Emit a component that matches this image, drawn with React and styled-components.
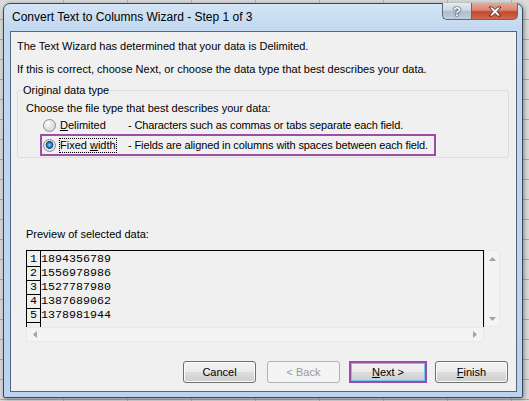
import React from "react";
import styled, { createGlobalStyle, css } from "styled-components";

const GlobalStyle = createGlobalStyle`
  html, body {
    margin: 0;
    padding: 0;
  }
  body {
    width: 529px;
    height: 401px;
    overflow: hidden;
    font-family: "Liberation Sans", Arial, sans-serif;
    background-color: #d9d9d9;
    background-image:
      repeating-linear-gradient(to bottom, transparent 0, transparent 19px, #a9a9a9 19px, #a9a9a9 20px),
      repeating-linear-gradient(to right, transparent 0, transparent 63px, #b4b4b4 63px, #b4b4b4 64px);
  }
`;

const Desktop = styled.div`
  padding: 3px 0 0 3px;
  height: 401px;
  box-sizing: border-box;
`;

const Window = styled.div`
  width: 520px;
  height: 395px;
  box-sizing: border-box;
  display: flex;
  flex-direction: column;
  padding: 0 5px 5px 6px;
  border: 1px solid #3b4858;
  border-radius: 7px 7px 2px 2px;
  background: linear-gradient(to bottom, #d3e4f5 0, #c1d8f0 27px, #b9d3f0 100%);
  box-shadow: 1px 1px 4px rgba(0, 0, 0, 0.4);
`;

const TitleBar = styled.div`
  height: 27px;
  display: flex;
  align-items: flex-start;
`;

const Title = styled.div`
  flex: 1;
  align-self: center;
  padding-left: 2px;
  font-size: 12px;
  color: #000;
  line-height: 27px;
`;

const CaptionButtons = styled.div`
  display: flex;
  margin: -1px -1px 0 0;
`;

const CaptionButton = styled.div`
  height: 17px;
  box-sizing: border-box;
  display: flex;
  align-items: center;
  justify-content: center;
  border: 1px solid #5b6a7c;
  border-top: none;
  ${(p) =>
    p.$close
      ? css`
          width: 47px;
          border-radius: 0 0 5px 0;
          background: linear-gradient(to bottom, #e8a797 0%, #d88670 45%, #c4492f 55%, #d0684c 100%);
        `
      : css`
          width: 29px;
          border-right: none;
          border-radius: 0 0 0 5px;
          background: linear-gradient(to bottom, #e3eaf3 0%, #cdd7e3 45%, #aebbcb 55%, #c3cfdd 100%);
        `}
`;

const HelpGlyph = styled.span`
  font-family: "Liberation Sans", Arial, sans-serif;
  font-weight: bold;
  font-size: 13px;
  line-height: 13px;
  color: #fff;
  text-shadow: 0 0 1px #2b3a4c, 0 0 1px #2b3a4c, 0 0 2px #2b3a4c;
`;

const Panel = styled.div`
  height: 361px;
  box-sizing: border-box;
  border: 1px solid #56657a;
  background: #f0f0f0;
  padding: 0 7px 0 6px;
  display: flex;
  flex-direction: column;
  font-size: 11px;
  color: #000;
`;

const Line = styled.div`
  line-height: 14px;
  height: 14px;
  margin-top: ${(p) => p.$gap}px;
  margin-left: ${(p) => p.$indent || 0}px;
  white-space: nowrap;
`;

const GroupBox = styled.fieldset`
  margin: 7px 0 0;
  padding: 0;
  min-width: 0;
  border: 1px solid #d5dfe5;
  border-radius: 3px;
`;

const Legend = styled.legend`
  margin-left: 4px;
  padding: 0 1px;
  line-height: 14px;
`;

const GroupBody = styled.div`
  padding: 4px 0 2px 8px;
`;

const OptionRow = styled.div`
  margin-left: 15px;
  width: 394px;
  height: 20px;
  box-sizing: border-box;
  padding-left: 2px;
  display: flex;
  align-items: center;
  white-space: nowrap;
  ${(p) =>
    p.$highlight &&
    css`
      outline: 2px solid #9b4ea3;
      outline-offset: -1px;
    `}
`;

const Radio = styled.span`
  width: 13px;
  height: 13px;
  box-sizing: border-box;
  border-radius: 50%;
  border: 1px solid #8a8c8e;
  margin-right: 3px;
  flex: none;
  background: ${(p) =>
    p.$checked
      ? "radial-gradient(circle at 50% 45%, #a6e0ff 0, #3a9be6 1.5px, #1a5a9e 3px, #24446b 3.6px, #e9e9e9 4.2px, #cfcfcf 100%)"
      : "radial-gradient(circle at 35% 30%, #ffffff 0, #ececec 3px, #cdcdcd 100%)"};
`;

const OptionCell = styled.span`
  width: 69px;
  flex: none;
`;

const OptionLabel = styled.span`
  display: inline-block;
  line-height: 13px;
  border: 1px dotted ${(p) => (p.$focused ? "#000" : "transparent")};
`;

const Description = styled.span`
  letter-spacing: -0.12px;
`;

const PreviewGrid = styled.div`
  margin: 9px 0 0 9px;
  width: 474px;
  height: 92px;
  display: grid;
  grid-template-columns: 458px 16px;
  grid-template-rows: 77px 15px;
`;

const DataBox = styled.div`
  border: 1px solid #000;
  border-bottom: none;
  display: flex;
  overflow: hidden;
  font-family: "Liberation Mono", "Courier New", monospace;
  font-size: 11.67px;
`;

const NumberColumn = styled.div`
  width: 13px;
  flex: none;
  border-right: 1px solid #000;
  padding-top: 2px;
`;

const NumberCell = styled.div`
  height: 13px;
  line-height: 13px;
  border-bottom: 1px solid #000;
  text-align: center;
`;

const DataColumn = styled.div`
  padding-top: 2px;
`;

const DataLine = styled.div`
  height: 14px;
  line-height: 13px;
`;

const ScrollTrack = styled.div`
  background: #f4f4f4;
  border: 1px solid #e9e9e9;
  box-sizing: border-box;
  display: flex;
  align-items: center;
  justify-content: space-between;
  flex-direction: ${(p) => (p.$vertical ? "column" : "row")};
  padding: ${(p) => (p.$vertical ? "6px 0 5px" : "0 6px")};
`;

const ButtonRow = styled.div`
  margin: 19px 1px 0 0;
  display: flex;
  justify-content: flex-end;
  gap: 11px;
`;

const Button = styled.button`
  width: 73px;
  height: 22px;
  box-sizing: border-box;
  padding: 0;
  font-family: "Liberation Sans", Arial, sans-serif;
  font-size: 11px;
  color: #000;
  border: 1px solid #707070;
  border-radius: 3px;
  background: linear-gradient(to bottom, #f2f2f2 0%, #ebebeb 50%, #dddddd 51%, #cfcfcf 100%);
  box-shadow: inset 0 0 0 1px #fbfbfb;

  &:disabled {
    color: #9a9a9a;
    border-color: #adb2b5;
    background: #f4f4f4;
    box-shadow: none;
  }

  ${(p) =>
    p.$marked &&
    css`
      width: 78px;
      margin: 0 -3px 0 -2px;
      border: 2px solid #9b4ea3;
      border-radius: 0;
      box-shadow: inset 0 0 0 1px #6cc6ee;
    `}
`;

const Arrow = ({ dir }) => {
  const points = {
    up: "0,4 3.5,0 7,4",
    down: "0,0 3.5,4 7,0",
    left: "4,0 0,3.5 4,7",
    right: "0,0 4,3.5 0,7",
  }[dir];
  const horizontal = dir === "left" || dir === "right";
  return (
    <svg width={horizontal ? 4 : 7} height={horizontal ? 7 : 4}>
      <polygon points={points} fill="#a2a2a2" />
    </svg>
  );
};

const CloseGlyph = () => (
  <svg width="14" height="11" viewBox="0 0 14 11">
    <path
      d="M1 1 H4.5 L7 3.6 L9.5 1 H13 L9 5.5 L13 10 H9.5 L7 7.4 L4.5 10 H1 L5 5.5 Z"
      fill="#fff"
      stroke="#4a1f15"
      strokeWidth="0.9"
      strokeLinejoin="round"
    />
  </svg>
);

const rows = ["1894356789", "1556978986", "1527787980", "1387689062", "1378981944"];

export default function App() {
  return (
    <>
      <GlobalStyle />
      <Desktop>
        <Window>
          <TitleBar>
            <Title>Convert Text to Columns Wizard - Step 1 of 3</Title>
            <CaptionButtons>
              <CaptionButton>
                <HelpGlyph>?</HelpGlyph>
              </CaptionButton>
              <CaptionButton $close>
                <CloseGlyph />
              </CaptionButton>
            </CaptionButtons>
          </TitleBar>
          <Panel>
            <Line $gap={7}>The Text Wizard has determined that your data is Delimited.</Line>
            <Line $gap={9}>
              If this is correct, choose Next, or choose the data type that best describes your data.
            </Line>
            <GroupBox>
              <Legend>Original data type</Legend>
              <GroupBody>
                <Line $gap={0}>Choose the file type that best describes your data:</Line>
                <OptionRow>
                  <Radio />
                  <OptionCell>
                    <OptionLabel>
                      <u>D</u>elimited
                    </OptionLabel>
                  </OptionCell>
                  <Description>- Characters such as commas or tabs separate each field.</Description>
                </OptionRow>
                <OptionRow $highlight>
                  <Radio $checked />
                  <OptionCell>
                    <OptionLabel $focused>
                      Fixed <u>w</u>idth
                    </OptionLabel>
                  </OptionCell>
                  <Description>- Fields are aligned in columns with spaces between each field.</Description>
                </OptionRow>
              </GroupBody>
            </GroupBox>
            <Line $gap={69} $indent={9}>
              Preview of selected data:
            </Line>
            <PreviewGrid>
              <DataBox>
                <NumberColumn>
                  {rows.map((_, i) => (
                    <NumberCell key={i}>{i + 1}</NumberCell>
                  ))}
                </NumberColumn>
                <DataColumn>
                  {rows.map((r) => (
                    <DataLine key={r}>{r}</DataLine>
                  ))}
                </DataColumn>
              </DataBox>
              <ScrollTrack $vertical>
                <Arrow dir="up" />
                <Arrow dir="down" />
              </ScrollTrack>
              <ScrollTrack>
                <Arrow dir="left" />
                <Arrow dir="right" />
              </ScrollTrack>
              <div />
            </PreviewGrid>
            <ButtonRow>
              <Button>Cancel</Button>
              <Button disabled>&lt; Back</Button>
              <Button $marked>
                <u>N</u>ext &gt;
              </Button>
              <Button>
                <u>F</u>inish
              </Button>
            </ButtonRow>
          </Panel>
        </Window>
      </Desktop>
    </>
  );
}
